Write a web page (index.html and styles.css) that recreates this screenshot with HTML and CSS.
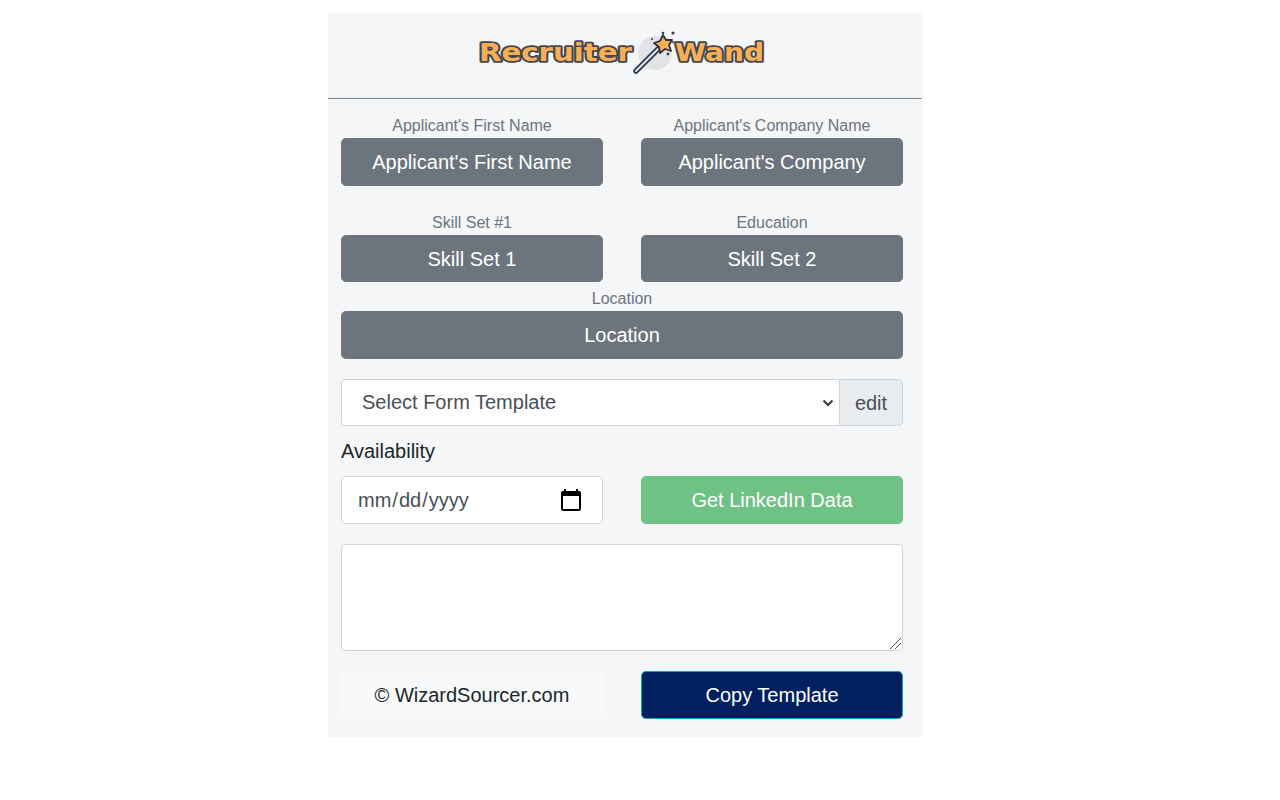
FILE: index.html
```html
<!DOCTYPE html>
<html lang="en">
<head>
<meta charset="utf-8">
<title>Recruiter Wand</title>
<link rel="stylesheet" href="styles.css">
</head>
<body>
<main class="panel">
  <header class="header">
    <svg class="logo" width="296" height="52" viewBox="0 0 296 52" role="img" aria-label="Recruiter Wand">
      <circle class="logo-disc" cx="181" cy="27" r="17"/>
      <text class="logo-text" x="5" y="35" textLength="153" lengthAdjust="spacingAndGlyphs">Recruiter</text>
      <text class="logo-text" x="201" y="35" textLength="89" lengthAdjust="spacingAndGlyphs">Wand</text>
      <path class="wand-outline" d="M162 45 L184 23"/>
      <path class="wand-core" d="M162 45 L184 23"/>
      <path class="star" d="M189 9 L192 14 L198 14 L195 19 L197 25 L191 23 L186 27 L185 21 L180 17 L186 15 Z"/>
      <circle class="spark" cx="189" cy="7" r="1.3"/>
      <circle class="spark" cx="199" cy="7" r="1.6"/>
      <circle class="spark" cx="178" cy="13" r="1"/>
      <circle class="spark" cx="194" cy="28" r="1.4"/>
      <circle class="spark" cx="199" cy="16" r="1"/>
    </svg>
  </header>

  <div class="row row-first">
    <div class="field">
      <label class="cap">Applicant's First Name</label>
      <button class="btn btn-grey">Applicant's First Name</button>
    </div>
    <div class="field">
      <label class="cap">Applicant's Company Name</label>
      <button class="btn btn-grey">Applicant's Company</button>
    </div>
  </div>

  <div class="row row-second">
    <div class="field">
      <label class="cap">Skill Set #1</label>
      <button class="btn btn-grey btn-short">Skill Set 1</button>
    </div>
    <div class="field">
      <label class="cap">Education</label>
      <button class="btn btn-grey btn-short">Skill Set 2</button>
    </div>
  </div>

  <div class="field field-location">
    <label class="cap">Location</label>
    <button class="btn btn-grey">Location</button>
  </div>

  <div class="input-group">
    <select class="select">
      <option>Select Form Template</option>
    </select>
    <span class="edit">edit</span>
  </div>

  <div class="availability">Availability</div>

  <div class="row">
    <input class="date" type="date">
    <button class="btn btn-green">Get LinkedIn Data</button>
  </div>

  <textarea class="notes"></textarea>

  <div class="row row-footer">
    <div class="credit">© WizardSourcer.com</div>
    <button class="btn btn-navy">Copy Template</button>
  </div>
</main>
</body>
</html>
```

FILE: styles.css
```css
* { box-sizing: border-box; }

html, body { margin: 0; background: #fff; }

body {
  padding: 13px 0 0 328px;
  font-family: "Liberation Sans", Arial, sans-serif;
  color: #212529;
}

.panel {
  width: 594px;
  height: 724px;
  padding: 0 19px 0 13px;
  background: #f4f6f8;
}

.header {
  display: flex;
  justify-content: center;
  height: 86px;
  margin: 0 -19px 0 -13px;
  padding: 13px 6px 0 0;
  border-bottom: 1px solid #7d8491;
}

.logo { display: block; }
.logo-disc { fill: #e2e3e5; }
.logo-text {
  font-family: "DejaVu Sans", sans-serif;
  font-weight: 700;
  font-size: 24px;
  fill: #f7b058;
  stroke: #44474d;
  stroke-width: 3.6px;
  paint-order: stroke;
  stroke-linejoin: round;
}
.wand-outline { stroke: #2f3a55; stroke-width: 5.5px; stroke-linecap: round; }
.wand-core { stroke: #e8ebf0; stroke-width: 1.8px; stroke-linecap: round; }
.star { fill: #f7b058; stroke: #2f3440; stroke-width: 1.8px; stroke-linejoin: round; }
.spark { fill: #3a3f4b; }

.row {
  display: grid;
  grid-template-columns: 262px 262px;
  column-gap: 38px;
}
.row-first { margin-top: 15px; }
.row-second { margin-top: 25px; }
.row-footer { margin-top: 20px; }

.field { display: flex; flex-direction: column; }
.field-location { margin-top: 5px; }

.cap {
  height: 24px;
  font-size: 16px;
  line-height: 24px;
  text-align: center;
  color: #6c757d;
}

.btn {
  display: block;
  width: 100%;
  height: 48px;
  padding: 0 16px;
  border: 1px solid transparent;
  border-radius: 4.8px;
  font-family: inherit;
  font-size: 20px;
  line-height: 30px;
  text-align: center;
  color: #fff;
}
.btn-short { height: 47px; }
.btn-grey { background: #6c757d; border-color: #6c757d; }
.btn-green { background: #6fc285; border-color: #6fc285; }
.btn-navy { background: #002060; border-color: #17a2b8; }

.input-group {
  display: flex;
  height: 47px;
  margin-top: 20px;
}
.select {
  flex: 1;
  min-width: 0;
  height: 100%;
  padding: 0 8px 2px 20px;
  appearance: none;
  border: 1px solid #ced4da;
  border-right: 0;
  border-radius: 4.8px 0 0 4.8px;
  background-color: #fff;
  background-image: url("data:image/svg+xml,%3Csvg xmlns='http://www.w3.org/2000/svg' width='12' height='8' viewBox='0 0 12 8'%3E%3Cpath d='M1.5 1.5 L6 6 L10.5 1.5' fill='none' stroke='%23343a40' stroke-width='2'/%3E%3C/svg%3E");
  background-repeat: no-repeat;
  background-position: right 5px center;
  font-family: inherit;
  font-size: 20px;
  color: #495057;
}
.edit {
  display: flex;
  align-items: center;
  justify-content: center;
  width: 64px;
  padding-top: 2px;
  border: 1px solid #ced4da;
  border-radius: 0 4.8px 4.8px 0;
  background: #e9ecef;
  font-size: 20px;
  color: #495057;
}

.availability {
  height: 30px;
  margin: 10px 0;
  font-size: 20px;
  line-height: 30px;
}

.date {
  width: 100%;
  height: 48px;
  padding: 8px 19px 8px 15px;
  border: 1px solid #ced4da;
  border-radius: 4.8px;
  background: #fff;
  font-family: inherit;
  font-size: 20px;
  color: #495057;
}
.date::-webkit-calendar-picker-indicator {
  width: 24px;
  height: 24px;
  padding: 0;
  margin: 0;
  background-size: 24px 24px;
}

.notes {
  display: block;
  width: 100%;
  height: 107px;
  margin-top: 20px;
  border: 1px solid #ced4da;
  border-radius: 4.8px;
  background: #fff;
}
.notes::-webkit-resizer {
  background: url("data:image/svg+xml,%3Csvg xmlns='http://www.w3.org/2000/svg' width='14' height='14' viewBox='0 0 14 14'%3E%3Cpath d='M2 13 L13 2 M7 13 L13 7' fill='none' stroke='%23555' stroke-width='1'/%3E%3C/svg%3E") no-repeat center;
}

.credit {
  height: 48px;
  border-radius: 4.8px;
  background: #f8f9fa;
  font-size: 20px;
  line-height: 48px;
  text-align: center;
}
```
